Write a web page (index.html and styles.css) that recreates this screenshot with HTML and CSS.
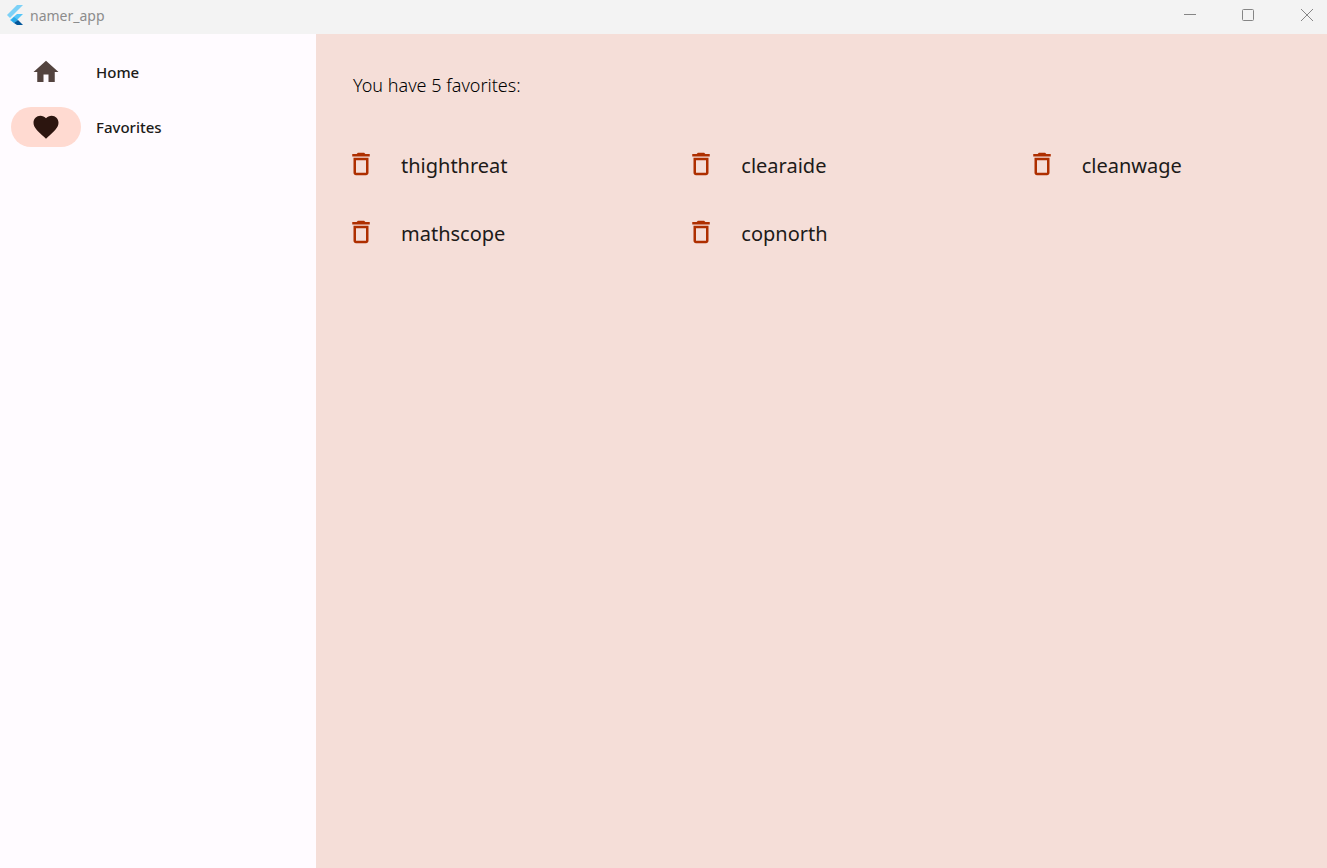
FILE: index.html
```html
<!DOCTYPE html>
<html lang="en">
<head>
<meta charset="utf-8">
<title>namer_app</title>
<link rel="stylesheet" href="styles.css">
</head>
<body>
<svg class="sprite" aria-hidden="true">
  <symbol id="trash" viewBox="0 0 24 24"><path d="M6 19c0 1.100.9 2 2 2h8c1.100 0 2-.9 2-2V7H6v12zM8 9h8v10H8V9zm7.500-5-1-1h-5l-1 1H5v2h14V4z"/></symbol>
</svg>
<header class="titlebar">
  <svg class="logo" viewBox="0 0 18 20" aria-hidden="true">
    <path fill="#54c5f8" fill-opacity=".75" d="M11 0h6L4 13 1 10z"/>
    <path fill="#54c5f8" d="M11 9h6l-5 5-4 4-4-3z"/>
    <path fill="#29a8e8" d="m5 15 3-3 4 3-4 3z"/>
    <path fill="#01579b" d="m8 18 4-3 5 5h-6z"/>
  </svg>
  <span class="app-name">namer_app</span>
  <div class="window-controls">
    <button type="button" aria-label="Minimize"><svg viewBox="0 0 12 12"><path d="M0 5.500h12"/></svg></button>
    <button type="button" aria-label="Maximize"><svg viewBox="0 0 12 12"><rect x=".5" y=".5" width="11" height="11" rx="1"/></svg></button>
    <button type="button" aria-label="Close"><svg viewBox="0 0 12 12"><path d="m0 0 12 12M12 0 0 12"/></svg></button>
  </div>
</header>
<div class="app">
  <nav class="rail">
    <a class="destination" href="#home">
      <span class="indicator"><svg class="icon" viewBox="0 0 24 24"><path d="M10 20v-6h4v6h5v-8h3L12 3 2 12h3v8z"/></svg></span>
      <span>Home</span>
    </a>
    <a class="destination selected" href="#favorites" aria-current="page">
      <span class="indicator"><svg class="icon" viewBox="0 0 24 24"><path d="m12 21.350-1.450-1.320C5.400 15.360 2 12.280 2 8.500 2 5.420 4.420 3 7.500 3c1.740 0 3.410.81 4.500 2.090C13.090 3.810 14.760 3 16.500 3 19.580 3 22 5.420 22 8.500c0 3.780-3.400 6.860-8.550 11.540z"/></svg></span>
      <span>Favorites</span>
    </a>
  </nav>
  <main class="page">
    <p class="summary">You have 5 favorites:</p>
    <ul class="favorites">
      <li><button type="button" aria-label="Delete thighthreat"><svg class="icon"><use href="#trash"/></svg></button><span>thighthreat</span></li>
      <li><button type="button" aria-label="Delete clearaide"><svg class="icon"><use href="#trash"/></svg></button><span>clearaide</span></li>
      <li><button type="button" aria-label="Delete cleanwage"><svg class="icon"><use href="#trash"/></svg></button><span>cleanwage</span></li>
      <li><button type="button" aria-label="Delete mathscope"><svg class="icon"><use href="#trash"/></svg></button><span>mathscope</span></li>
      <li><button type="button" aria-label="Delete copnorth"><svg class="icon"><use href="#trash"/></svg></button><span>copnorth</span></li>
    </ul>
  </main>
</div>
</body>
</html>
```

FILE: styles.css
```css
* { box-sizing: border-box; }
body {
  margin: 0;
  min-height: 100vh;
  display: flex;
  flex-direction: column;
  font-family: "Noto Sans", "Open Sans", sans-serif;
  color: #201a18;
}
button { border: 0; padding: 0; background: none; }
.sprite { display: none; }
.titlebar {
  display: flex;
  align-items: flex-start;
  height: 34px;
  padding: 4px 0 0 6px;
  background: #f3f3f3;
  color: #8c8c8c;
}
.logo { width: 18px; height: 20px; margin-top: 1px; }
.app-name { margin-left: 6px; font-size: 14px; line-height: 24px; }
.window-controls { display: flex; margin-left: auto; }
.window-controls button { width: 58px; height: 22px; display: grid; place-items: center; }
.window-controls button:last-child { width: 40px; margin-left: 10px; }
.window-controls svg { width: 12px; height: 12px; fill: none; stroke: #858585; }
.app { flex: 1; display: flex; }
.rail {
  width: 316px;
  padding: 18px 11px;
  display: flex;
  flex-direction: column;
  gap: 15px;
  background: #fffbff;
}
.destination {
  display: flex;
  align-items: center;
  gap: 15px;
  color: inherit;
  text-decoration: none;
  font-size: 15px;
  font-weight: 500;
}
.indicator {
  display: grid;
  place-items: center;
  width: 70px;
  height: 40px;
  border-radius: 20px;
  color: #53433f;
}
.selected .indicator { background: #ffdad1; color: #2c150f; }
.icon { display: block; width: 30px; height: 30px; fill: currentColor; }
.page { flex: 1; background: #f5ded8; }
.summary {
  margin: 0;
  padding: 37px 37px;
  color: #000;
  font-size: 18px;
  font-weight: 300;
  line-height: 28px;
}
.favorites {
  list-style: none;
  margin: 0;
  padding: 0;
  display: grid;
  grid-template-columns: repeat(3, 1fr);
  gap: 10px;
}
.favorites li {
  display: flex;
  align-items: center;
  gap: 25px;
  height: 58px;
  padding-left: 30px;
  font-size: 20px;
}
.favorites button { padding-bottom: 2px; color: #ae2f00; }
```
